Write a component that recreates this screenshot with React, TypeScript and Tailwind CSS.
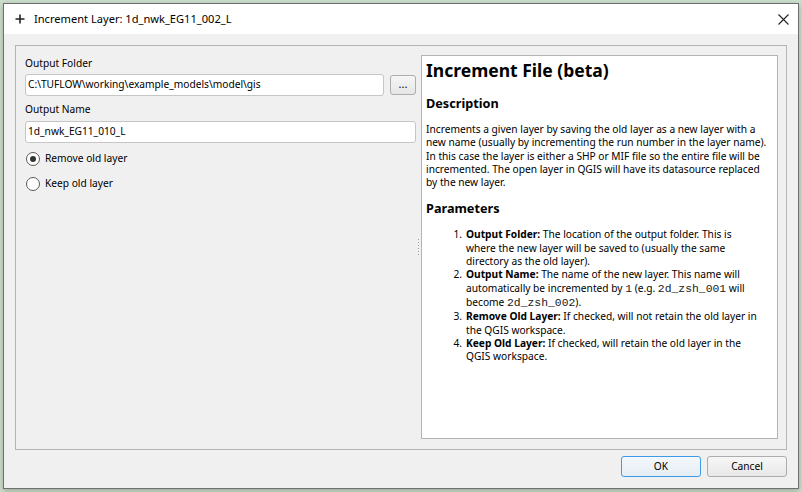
import React from "react";

const ui = { fontFamily: '"Noto Sans", "Open Sans", sans-serif' };
const mono = { fontFamily: '"Liberation Mono", "DejaVu Sans Mono", monospace' };

function Radio({ checked, label }: { checked: boolean; label: string }) {
  return (
    <div className="flex items-center h-[18px]">
      <div className="w-[14px] h-[14px] rounded-full border border-[#5a5a5a] bg-white flex items-center justify-center ml-[1px]">
        {checked && <div className="w-[6px] h-[6px] rounded-full bg-[#333]" />}
      </div>
      <span className="ml-[5px] text-[10.2px] text-black">{label}</span>
    </div>
  );
}

function Code({ children }: { children: React.ReactNode }) {
  return (
    <span style={mono} className="text-[11.4px] text-[#222]">
      {children}
    </span>
  );
}

export default function App() {
  return (
    <div style={ui} className="w-[802px] h-[492px] bg-[#cddfcc] p-[3px] flex overflow-hidden">
      <div className="w-[796px] h-[486px] flex flex-col border border-[#6f6f6f] bg-[#f0f0f0] shadow-[0_2px_6px_rgba(0,0,0,0.25)]">
        {/* title bar */}
        <div className="h-[30px] bg-white flex items-center shrink-0">
          <svg width="10" height="10" viewBox="0 0 10 10" className="ml-[11px]">
            <path d="M5 0.5V9.5M0.5 5H9.5" stroke="#222" strokeWidth="1.6" />
          </svg>
          <span className="ml-[9px] text-[11.1px] text-black">Increment Layer: 1d_nwk_EG11_002_L</span>
          <div className="flex-1" />
          <svg width="11" height="11" viewBox="0 0 11 11" className="mr-[9px]">
            <path d="M0.5 0.5L10.5 10.5M10.5 0.5L0.5 10.5" stroke="#222" strokeWidth="1.1" />
          </svg>
        </div>
        {/* content */}
        <div className="flex-1 flex flex-col px-[11px] pt-[11px] min-h-0">
          <div className="w-[772px] h-[405px] border border-[#b4b4b4] flex pl-[9px] pr-[9px] pt-[9px] pb-[10px]">
            {/* left panel */}
            <div className="w-[391px] shrink-0 flex flex-col">
              <div className="text-[10.2px] text-black h-[15px] leading-[15px] mt-[1px]">Output Folder</div>
              <div className="flex mt-[3px] h-[22px]">
                <div className="w-[359px] h-[22px] bg-white border border-[#c6c6c6] rounded-[3px] flex items-center px-[2px] text-[10.2px] text-black">
                  C:\TUFLOW\working\example_models\model\gis
                </div>
                <div className="ml-[6px] w-[26px] h-[20px] mt-[1px] border border-[#adadad] rounded-[3px] bg-gradient-to-b from-[#f6f6f6] to-[#e6e6e6] flex items-center justify-center text-[11px] leading-none pb-[3px] text-black">
                  ...
                </div>
              </div>
              <div className="text-[10.2px] text-black h-[15px] leading-[15px] mt-[6px]">Output Name</div>
              <div className="mt-[4px] w-[391px] h-[22px] bg-white border border-[#c6c6c6] rounded-[3px] flex items-center px-[2px] text-[10.2px] text-black">
                1d_nwk_EG11_010_L
              </div>
              <div className="mt-[7px]">
                <Radio checked label="Remove old layer" />
              </div>
              <div className="mt-[7px]">
                <Radio checked={false} label="Keep old layer" />
              </div>
            </div>
            {/* splitter */}
            <div className="w-[5px] shrink-0 flex flex-col items-center justify-center gap-[2px]">
              {[0, 1, 2, 3, 4, 5].map((i) => (
                <div key={i} className="w-[1px] h-[1px] bg-[#a0a0a0]" />
              ))}
            </div>
            {/* text browser */}
            <div className="w-[357px] shrink-0 overflow-hidden bg-white border border-[#b4b4b4] pl-[4px] pt-[3px] text-black">
              <div className="text-[17.5px] font-bold leading-[22px]">Increment File (beta)</div>
              <div className="text-[12.7px] font-bold leading-[18px] mt-[13px]">Description</div>
              <div className="text-[10.2px] leading-[13.3px] mt-[11px] whitespace-nowrap">
                <div>Increments a given layer by saving the old layer as a new layer with a</div>
                <div>new name (usually by incrementing the run number in the layer name).</div>
                <div>In this case the layer is either a SHP or MIF file so the entire file will be</div>
                <div>incremented. The open layer in QGIS will have its datasource replaced</div>
                <div>by the new layer.</div>
              </div>
              <div className="text-[12.7px] font-bold leading-[18px] mt-[10px]">Parameters</div>
              <div className="text-[10.2px] leading-[13.3px] mt-[11px] whitespace-nowrap">
                <div className="flex">
                  <span className="w-[40px] text-right pr-[4px]">1.</span>
                  <div>
                    <div><b>Output Folder:</b> The location of the output folder. This is</div>
                    <div>where the new layer will be saved to (usually the same</div>
                    <div>directory as the old layer).</div>
                  </div>
                </div>
                <div className="flex">
                  <span className="w-[40px] text-right pr-[4px]">2.</span>
                  <div>
                    <div><b>Output Name:</b> The name of the new layer. This name will</div>
                    <div>automatically be incremented by <Code>1</Code> (e.g. <Code>2d_zsh_001</Code> will</div>
                    <div>become <Code>2d_zsh_002</Code>).</div>
                  </div>
                </div>
                <div className="flex">
                  <span className="w-[40px] text-right pr-[4px]">3.</span>
                  <div>
                    <div><b>Remove Old Layer:</b> If checked, will not retain the old layer in</div>
                    <div>the QGIS workspace.</div>
                  </div>
                </div>
                <div className="flex">
                  <span className="w-[40px] text-right pr-[4px]">4.</span>
                  <div>
                    <div><b>Keep Old Layer:</b> If checked, will retain the old layer in the</div>
                    <div>QGIS workspace.</div>
                  </div>
                </div>
              </div>
            </div>
          </div>
          {/* buttons */}
          <div className="h-[38px] shrink-0 flex items-start justify-end pt-[6px] gap-[6px] pr-[0px]">
            <div className="w-[80px] h-[21px] border border-[#3c9ae6] rounded-[3px] bg-gradient-to-b from-[#f4f8fc] to-[#e6edf5] flex items-center justify-center text-[10.2px] text-black">
              OK
            </div>
            <div className="w-[80px] h-[21px] border border-[#adadad] rounded-[3px] bg-gradient-to-b from-[#f6f6f6] to-[#e8e8e8] flex items-center justify-center text-[10.2px] text-black">
              Cancel
            </div>
          </div>
        </div>
      </div>
    </div>
  );
}
